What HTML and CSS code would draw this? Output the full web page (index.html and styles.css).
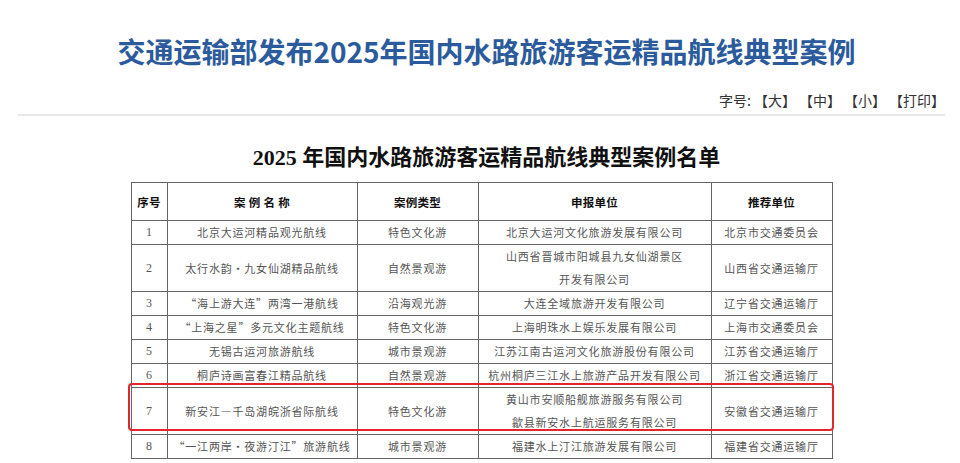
FILE: index.html
```html
<!DOCTYPE html>
<html lang="zh-CN">
<head>
<meta charset="utf-8">
<title>交通运输部发布2025年国内水路旅游客运精品航线典型案例</title>
<link rel="stylesheet" href="styles.css">
</head>
<body>
<div class="page">
  <h1 class="title">交通运输部发布2025年国内水路旅游客运精品航线典型案例</h1>
  <div class="tools">字号:<span>【大】</span><span>【中】</span><span>【小】</span><span>【打印】</span></div>
  <div class="rule"></div>
  <h2 class="list-title"><span class="lat">2025 </span>年国内水路旅游客运精品航线典型案例名单</h2>
  <div class="table-wrap">
    <table class="cases">
      <colgroup>
        <col class="c-no"><col class="c-name"><col class="c-type"><col class="c-org"><col class="c-rec">
      </colgroup>
      <tr class="h-head">
        <th>序号</th><th>案 例 名 称</th><th>案例类型</th><th>申报单位</th><th>推荐单位</th>
      </tr>
      <tr class="h1">
        <td class="no">1</td><td>北京大运河精品观光航线</td><td>特色文化游</td><td>北京大运河文化旅游发展有限公司</td><td>北京市交通委员会</td>
      </tr>
      <tr class="h2">
        <td class="no">2</td><td>太行水韵·九女仙湖精品航线</td><td>自然景观游</td><td>山西省晋城市阳城县九女仙湖景区<br>开发有限公司</td><td>山西省交通运输厅</td>
      </tr>
      <tr class="h1">
        <td class="no">3</td><td>“海上游大连”两湾一港航线</td><td>沿海观光游</td><td>大连全域旅游开发有限公司</td><td>辽宁省交通运输厅</td>
      </tr>
      <tr class="h1">
        <td class="no">4</td><td>“上海之星”多元文化主题航线</td><td>特色文化游</td><td>上海明珠水上娱乐发展有限公司</td><td>上海市交通委员会</td>
      </tr>
      <tr class="h1">
        <td class="no">5</td><td>无锡古运河旅游航线</td><td>城市景观游</td><td>江苏江南古运河文化旅游股份有限公司</td><td>江苏省交通运输厅</td>
      </tr>
      <tr class="h1">
        <td class="no">6</td><td>桐庐诗画富春江精品航线</td><td>自然景观游</td><td>杭州桐庐三江水上旅游产品开发有限公司</td><td>浙江省交通运输厅</td>
      </tr>
      <tr class="h7">
        <td class="no">7</td><td>新安江—千岛湖皖浙省际航线</td><td>特色文化游</td><td>黄山市安顺船舰旅游服务有限公司<br>歙县新安水上航运服务有限公司</td><td>安徽省交通运输厅</td>
      </tr>
      <tr class="h8">
        <td class="no">8</td><td>“一江两岸·夜游汀江”旅游航线</td><td>城市景观游</td><td>福建水上汀江旅游发展有限公司</td><td>福建省交通运输厅</td>
      </tr>
    </table>
    <div class="highlight"></div>
  </div>
</div>
</body>
</html>
```
FILE: styles.css
```css
html, body {
  margin: 0;
  padding: 0;
  background: #ffffff;
}
body {
  font-family: "Noto Sans CJK SC", "Noto Sans", sans-serif;
  color: #333;
}
.page {
  padding: 31px 15px 0 18px;
  width: 927px;
}
.title {
  margin: 0;
  padding-left: 10px;
  font-size: 28px;
  line-height: 40px;
  font-weight: 700;
  color: #2b5b9c;
  text-align: center;
}
.tools {
  margin-top: 19px;
  display: flex;
  justify-content: flex-end;
  gap: 3px;
  font-size: 14px;
  line-height: 20px;
  color: #333;
}
.rule {
  margin-top: 4px;
  height: 2px;
  background: #e8e8e8;
}
.list-title {
  margin: 27px 0 0 0;
  padding-left: 10px;
  text-align: center;
  font-family: "Liberation Serif", "Noto Sans CJK SC", serif;
  font-size: 22px;
  line-height: 30px;
  font-weight: 700;
  color: #111;
}
.list-title .lat {
  font-family: "Liberation Serif", serif;
}
.table-wrap {
  position: relative;
  width: 702px;
  margin: 9px auto 0 auto;
}
.cases {
  border-collapse: collapse;
  table-layout: fixed;
  width: 702px;
  border: 1.5px solid #333;
}
.c-no { width: 36px; }
.c-name { width: 190px; }
.c-type { width: 121px; }
.c-org { width: 233px; }
.c-rec { width: 121px; }
.cases th,
.cases td {
  border: 1px solid #666;
  padding: 0 2px;
  text-align: center;
  vertical-align: middle;
  white-space: nowrap;
  overflow: hidden;
}
.cases th {
  font-size: 11.5px;
  font-weight: 700;
  color: #111;
  line-height: 20px;
  letter-spacing: 0.3px;
}
.cases td {
  font-size: 11px;
  letter-spacing: 0.8px;
  line-height: 23px;
  color: #555;
}
.cases td.no {
  font-family: "Liberation Serif", serif;
  font-size: 12px;
  letter-spacing: 0;
}
.h-head { height: 38px; }
.h1 { height: 23px; }
.h2 { height: 47px; }
.h7 { height: 45px; }
.h8 { height: 24px; }
.highlight {
  position: absolute;
  left: -3px;
  top: 201px;
  width: 702px;
  height: 44px;
  border: 2px solid #e2262c;
  border-radius: 4px;
  pointer-events: none;
}
```
